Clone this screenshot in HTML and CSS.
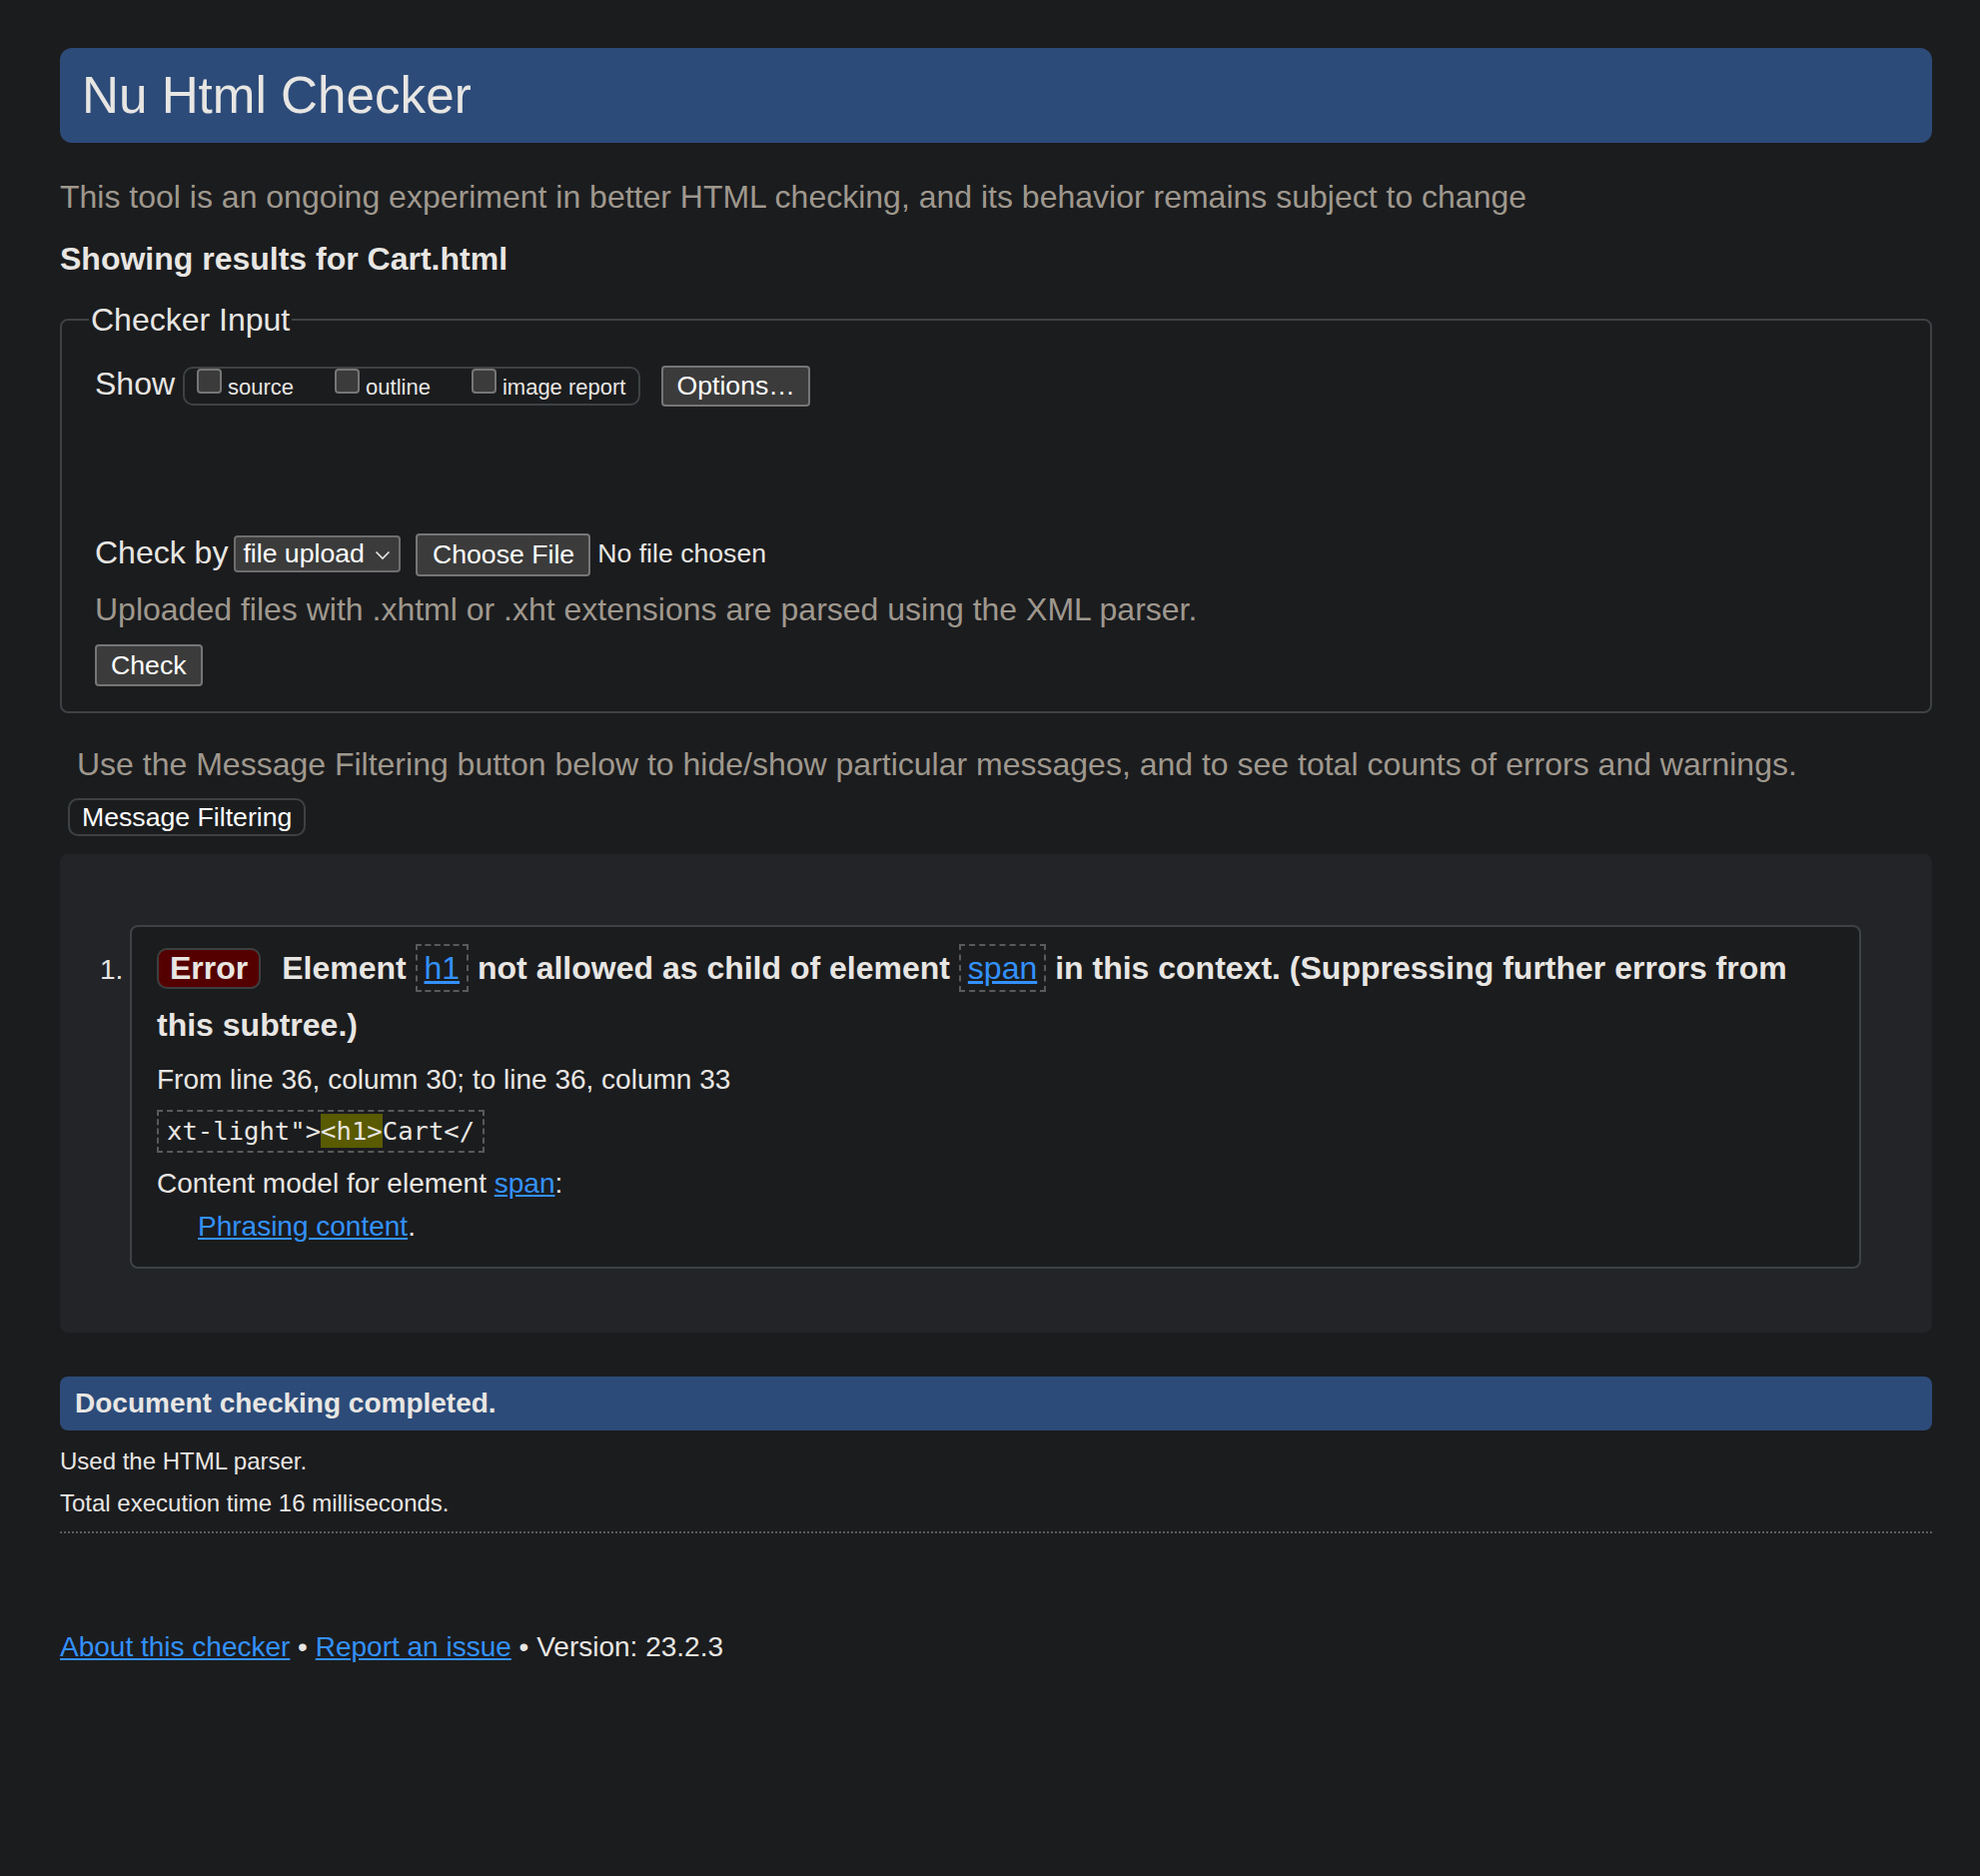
FILE: index.html
```html
<!DOCTYPE html>
<html lang="en">
<head>
<meta charset="utf-8">
<title>Showing results for Cart.html - Nu Html Checker</title>
<link rel="stylesheet" href="styles.css">
</head>
<body>
<h1 class="title">Nu Html Checker</h1>
<p class="intro">This tool is an ongoing experiment in better HTML checking, and its behavior remains subject to change</p>
<p class="showing">Showing results for Cart.html</p>

<fieldset class="checker-input">
  <legend>Checker Input</legend>
  <div class="show-row">
    <span class="row-label">Show</span>
    <span class="show-group">
      <label class="opt"><input type="checkbox" class="cb"><span class="opt-text">source</span></label>
      <label class="opt"><input type="checkbox" class="cb"><span class="opt-text">outline</span></label>
      <label class="opt"><input type="checkbox" class="cb"><span class="opt-text">image report</span></label>
    </span>
    <button type="button" class="btn btn-options">Options…</button>
  </div>
  <div class="checkby-row">
    <span class="row-label checkby-label">Check by</span>
    <span class="select">file upload<svg class="chev" width="16" height="10" viewBox="0 0 16 10"><polyline points="1.5,1.5 8,8 14.5,1.5" fill="none" stroke="#e8e6e3" stroke-width="1.6"/></svg></span>
    <button type="button" class="btn btn-file">Choose File</button>
    <span class="nofile">No file chosen</span>
  </div>
  <p class="hint">Uploaded files with .xhtml or .xht extensions are parsed using the XML parser.</p>
  <button type="button" class="btn btn-check">Check</button>
</fieldset>

<p class="filter-note">Use the Message Filtering button below to hide/show particular messages, and to see total counts of errors and warnings.</p>
<button type="button" class="btn-filter">Message Filtering</button>

<div class="results">
  <ol class="messages">
    <li class="msg-item">
      <span class="num">1.</span>
      <div class="msg-box">
        <p class="message"><strong class="badge">Error</strong> Element <code class="ref"><a href="#">h1</a></code> not allowed as child of element <code class="ref"><a href="#">span</a></code> in this context. (Suppressing further errors from this subtree.)</p>
        <p class="location">From line 36, column 30; to line 36, column 33</p>
        <p class="extract"><code class="ext">xt-light"&gt;<mark class="hl">&lt;h1&gt;</mark>Cart&lt;/</code></p>
        <p class="model">Content model for element <a href="#">span</a>:</p>
        <p class="phrasing"><a href="#">Phrasing content</a>.</p>
      </div>
    </li>
  </ol>
</div>

<p class="done">Document checking completed.</p>
<p class="stat">Used the HTML parser.</p>
<p class="stat stat-time">Total execution time 16 milliseconds.</p>
<hr class="dots">

<p class="footer"><a href="#">About this checker</a> • <a href="#">Report an issue</a> • Version: 23.2.3</p>
</body>
</html>
```

FILE: styles.css
```css
html {
  background: #1b1c1e;
}
body {
  margin: 0;
  padding: 48px 48px 120px 60px;
  background: #1b1c1e;
  color: #e8e6e3;
  font-family: "Liberation Sans", Arial, sans-serif;
  font-size: 32px;
}
a {
  color: #3391ff;
  text-decoration: underline;
}
p {
  margin: 0;
}

.title {
  margin: 0;
  height: 95px;
  line-height: 95px;
  padding: 0 22px;
  background: #2c4b79;
  border-radius: 12px;
  font-size: 51.2px;
  font-weight: normal;
  color: #e8e6e3;
}
.intro {
  margin-top: 34px;
  line-height: 40px;
  color: #9f988e;
}
.showing {
  margin-top: 22px;
  line-height: 40px;
  font-weight: bold;
}

.checker-input {
  margin: 21px 0 0;
  padding: 26px 30px 25px 33px;
  border: 2px solid #3e4244;
  border-radius: 8px;
  min-inline-size: 0;
}
.checker-input legend {
  padding: 0 2px;
  margin-left: -6px;
  line-height: 40px;
  font-size: 32px;
  color: #e8e6e3;
}

.show-row {
  display: flex;
  align-items: flex-start;
  height: 41px;
}
.row-label {
  line-height: 36px;
  font-size: 32px;
}
.show-group {
  display: flex;
  align-items: flex-start;
  box-sizing: border-box;
  height: 39px;
  margin: 1px 0 0 8px;
  padding: 0 13px 0 12px;
  border: 2px solid #3e4244;
  border-radius: 10px;
}
.opt {
  display: flex;
  align-items: flex-start;
  margin-right: 41px;
  font-size: 22px;
}
.opt:last-child {
  margin-right: 0;
}
.cb {
  appearance: none;
  -webkit-appearance: none;
  box-sizing: border-box;
  width: 25px;
  height: 25px;
  margin: 0 6px 0 0;
  border: 2px solid #767676;
  border-radius: 4px;
  background: #3b3b3b;
}
.opt-text {
  line-height: 25px;
  padding-top: 6px;
}

.btn {
  box-sizing: border-box;
  margin: 0;
  border: 2px solid #767676;
  border-radius: 4px;
  background: #3b3b3b;
  color: #ffffff;
  font-family: "Liberation Sans", Arial, sans-serif;
  font-size: 26.67px;
  line-height: 31px;
}
.btn-options {
  margin-left: 21px;
  padding: 3px 13px;
}

.checkby-row {
  display: flex;
  align-items: flex-start;
  margin-top: 127px;
}
.checkby-label {
  margin-top: 1px;
}
.select {
  display: flex;
  align-items: center;
  box-sizing: border-box;
  margin: 2px 0 0 6px;
  padding: 1px 8px 1px 7px;
  border: 2px solid #6e6e6e;
  border-radius: 4px;
  background: #3b3b3b;
  color: #ffffff;
  font-size: 26.67px;
  line-height: 31px;
}
.chev {
  margin-left: 10px;
  margin-top: 2px;
}
.btn-file {
  margin-left: 15px;
  padding: 4px 14px 4px 15px;
}
.nofile {
  margin: 5px 0 0 7px;
  font-size: 26.67px;
  line-height: 31px;
}
.hint {
  margin-top: 13px;
  line-height: 40px;
  color: #9f988e;
}
.btn-check {
  display: block;
  margin-top: 15px;
  padding: 4px 14px;
  line-height: 30px;
}

.filter-note {
  margin: 31px 0 0 17px;
  line-height: 40px;
  color: #9f988e;
}
.btn-filter {
  display: block;
  box-sizing: border-box;
  margin: 14px 0 0 8px;
  padding: 2px 12px;
  border: 2px solid #3e4244;
  border-radius: 10px;
  background: #1b1c1e;
  color: #ffffff;
  font-family: "Liberation Sans", Arial, sans-serif;
  font-size: 26.67px;
  line-height: 30px;
}

.results {
  margin-top: 18px;
  background: #222427;
  border-radius: 8px;
}
.messages {
  list-style: none;
  margin: 0;
  padding: 71px 71px 64px 0;
}
.msg-item {
  display: flex;
  align-items: baseline;
}
.num {
  flex: 0 0 30px;
  padding-left: 40px;
  font-size: 28px;
  line-height: 36px;
}
.msg-box {
  flex: 1;
  padding: 13px 25px 22px;
  border: 2px solid #3e4244;
  border-radius: 8px;
  background: #1b1c1e;
}
.message {
  font-weight: bold;
  line-height: 57px;
}
.badge {
  display: inline-block;
  margin-right: 12px;
  padding: 0 11px;
  line-height: 37px;
  border: 2px solid #3e3e3e;
  border-radius: 10px;
  background: #550000;
  color: #e8e6e3;
}
.ref {
  padding: 4px 7px;
  border: 2px dashed #5a5a5a;
  font-family: "Liberation Sans", Arial, sans-serif;
  font-weight: normal;
  font-size: 32px;
}
.location {
  margin-top: 8px;
  font-size: 28px;
  line-height: 36px;
}
.extract {
  display: flex;
  margin-top: 12px;
}
.ext {
  display: block;
  padding: 2px 8px;
  border: 2px dashed #5a5a5a;
  font-family: "DejaVu Sans Mono", "Liberation Mono", monospace;
  font-size: 25.6px;
  line-height: 35px;
  color: #e8e6e3;
}
.hl {
  background: #5a5a00;
  color: #e8e6e3;
  padding: 2px 0;
}
.model {
  margin-top: 13px;
  font-size: 28px;
  line-height: 36px;
}
.phrasing {
  margin: 7px 0 0 41px;
  font-size: 28px;
  line-height: 36px;
}

.done {
  margin-top: 44px;
  height: 54px;
  line-height: 54px;
  padding: 0 15px;
  background: #2c4b79;
  border-radius: 8px;
  font-size: 28px;
  font-weight: bold;
}
.stat {
  margin-top: 16px;
  font-size: 24px;
  line-height: 30px;
}
.stat-time {
  margin-top: 12px;
}
.dots {
  margin: 13px 0 0;
  height: 0;
  border: 0;
  border-top: 2px dotted #5c5c5c;
}
.footer {
  margin-top: 96px;
  font-size: 28px;
  line-height: 36px;
}
```
